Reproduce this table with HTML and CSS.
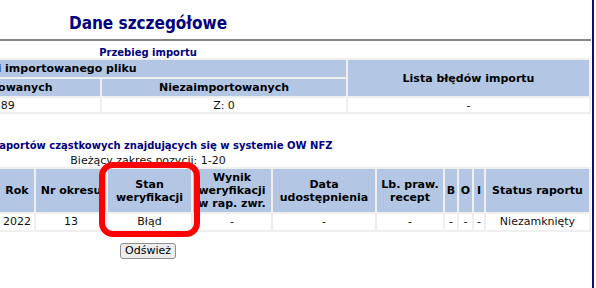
FILE: index.html
```html
<!DOCTYPE html>
<html lang="pl">
<head>
<meta charset="utf-8">
<title>Dane szczegółowe</title>
<link rel="stylesheet" href="styles.css">
</head>
<body>
<div class="page">
  <h1 class="title">Dane szczegółowe</h1>
  <div class="rule"></div>

  <div class="caption caption-import">Przebieg importu</div>
  <table class="grid grid-import">
    <colgroup>
      <col class="ci-all"><col class="ci-ok"><col class="ci-nok"><col class="ci-err">
    </colgroup>
    <tr class="hrow">
      <th colspan="3">Liczba pozycji importowanego pliku</th>
      <th rowspan="2">Lista błędów importu</th>
    </tr>
    <tr class="hrow">
      <th>Wszystkich</th>
      <th>Zaimportowanych</th>
      <th>Niezaimportowanych</th>
    </tr>
    <tr class="drow">
      <td>W: 189</td>
      <td>Z: 189</td>
      <td>Z: 0</td>
      <td>-</td>
    </tr>
  </table>

  <div class="caption caption-list">Lista raportów cząstkowych znajdujących się w systemie OW NFZ</div>
  <div class="range">Bieżący zakres pozycji: 1-20</div>
  <table class="grid grid-reports">
    <colgroup>
      <col class="cr-lp"><col class="cr-id"><col class="cr-rok"><col class="cr-nr">
      <col class="cr-stan"><col class="cr-wynik"><col class="cr-data"><col class="cr-lb">
      <col class="cr-b"><col class="cr-o"><col class="cr-i"><col class="cr-status">
    </colgroup>
    <tr class="hrow3">
      <th>Lp.</th>
      <th>Identyfikator raportu</th>
      <th>Rok</th>
      <th>Nr okresu</th>
      <th>Stan weryfikacji</th>
      <th>Wynik weryfikacji w rap. zwr.</th>
      <th>Data udostępnienia</th>
      <th>Lb. praw. recept</th>
      <th>B</th>
      <th>O</th>
      <th>I</th>
      <th>Status raportu</th>
    </tr>
    <tr class="drow2">
      <td>1</td>
      <td>R/2022/13/001</td>
      <td>2022</td>
      <td>13</td>
      <td>Błąd</td>
      <td>-</td>
      <td>-</td>
      <td>-</td>
      <td>-</td>
      <td>-</td>
      <td>-</td>
      <td>Niezamknięty</td>
    </tr>
  </table>

  <div class="actions">
    <button class="btn" type="button">Odśwież</button>
  </div>
</div>
<div class="highlight"></div>
</body>
</html>
```

FILE: styles.css
```css
html, body {
  margin: 0;
  padding: 0;
  background: #ffffff;
}

body {
  font-family: "DejaVu Sans", Verdana, sans-serif;
  font-size: 11px;
  color: #000000;
  overflow: hidden;
}

.page {
  margin-left: -296px;
  width: 888px;
  min-height: 288px;
  border-right: 2px solid #0e0e6e;
}

.title {
  margin: 0;
  padding-top: 13px;
  font-family: "DejaVu Sans Condensed", "DejaVu Sans", sans-serif;
  font-stretch: condensed;
  font-size: 17px;
  line-height: 20px;
  font-weight: bold;
  color: #000080;
  text-align: center;
}

.rule {
  margin: 6px 1px 0 0;
  border-top: 2px solid #858585;
}

.caption {
  font-size: 10px;
  line-height: 11px;
  font-weight: bold;
  color: #000080;
  text-align: center;
}

.caption-import {
  margin-top: 6px;
}

.caption-list {
  margin-top: 26px;
}

.range {
  margin-top: 3px;
  line-height: 13px;
  text-align: center;
  color: #111111;
}

.grid {
  border-collapse: separate;
  border-spacing: 2px;
  table-layout: fixed;
  width: 887px;
  background: #efefef;
}

.grid th {
  background: #b3c7e5;
  font-weight: bold;
  font-size: 11px;
  line-height: 13px;
  padding: 2px 0;
  text-align: center;
  vertical-align: middle;
  color: #000000;
}

.grid td {
  background: #ffffff;
  font-size: 11px;
  text-align: center;
  color: #111111;
  padding: 0;
}

.grid-import .drow td {
  line-height: 13px;
  padding: 1px 0 0;
}

.grid-reports .drow2 td {
  line-height: 14px;
  padding: 1px 0;
}

.ci-all { width: 186px; }
.ci-ok { width: 206px; }
.ci-nok { width: 244px; }
.ci-err { width: 241px; }

.cr-lp { width: 40px; }
.cr-id { width: 250px; }
.cr-rok { width: 34px; }
.cr-nr { width: 70px; }
.cr-stan { width: 83px; }
.cr-wynik { width: 78px; }
.cr-data { width: 102px; }
.cr-lb { width: 66px; }
.cr-b { width: 12px; }
.cr-o { width: 13px; }
.cr-i { width: 10px; }
.cr-status { width: 103px; }

.actions {
  margin-top: 11px;
  text-align: center;
}

.btn {
  font-family: "DejaVu Sans", Verdana, sans-serif;
  font-size: 11px;
  line-height: 14px;
  padding: 0 4px;
  margin: 0;
  color: #000000;
  background: #ececec;
  border: 1px solid #8f8f8f;
  border-radius: 3px;
}

.highlight {
  position: absolute;
  left: 99px;
  top: 162px;
  width: 101px;
  height: 75px;
  box-sizing: border-box;
  border: 6px solid #ff0000;
  border-radius: 14px;
}
```
